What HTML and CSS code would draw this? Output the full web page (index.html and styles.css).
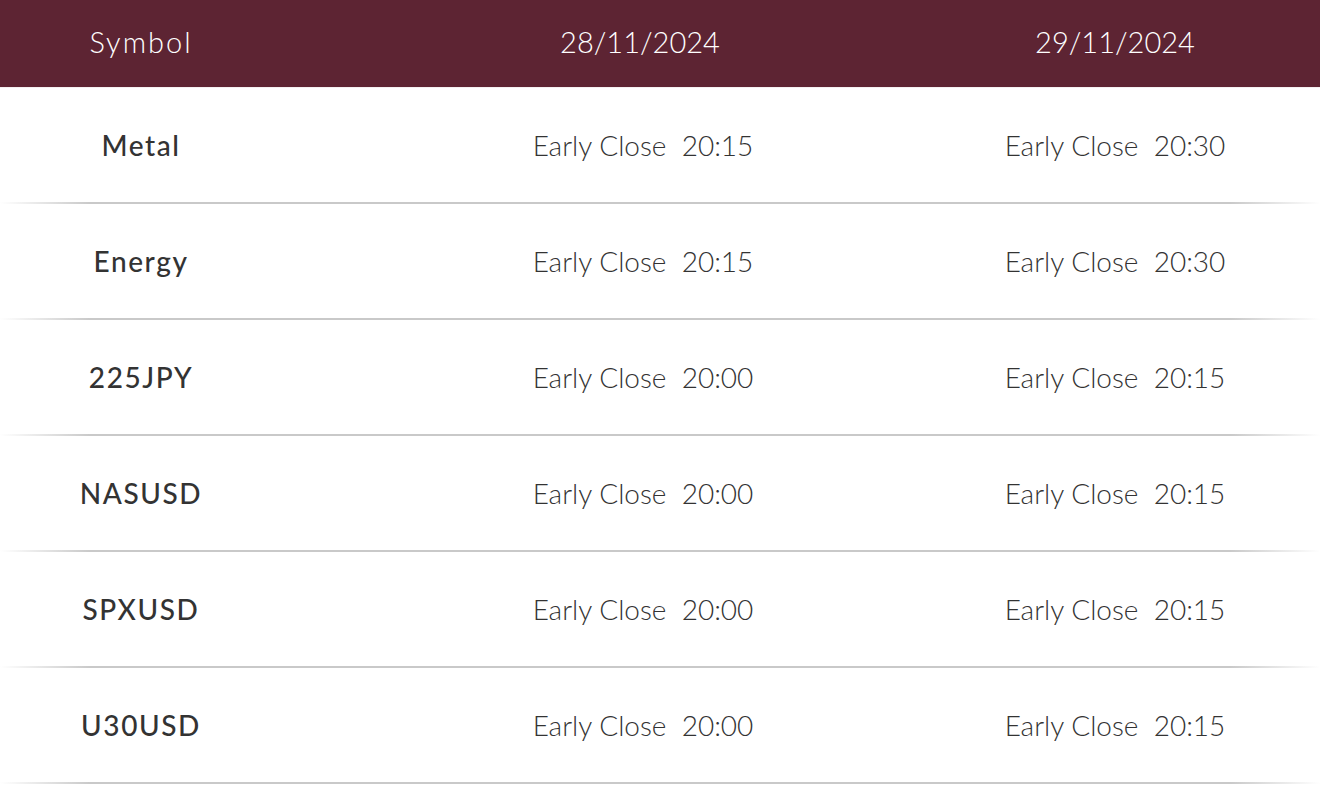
FILE: index.html
```html
<!DOCTYPE html>
<html lang="en">
<head>
<meta charset="utf-8">
<title>Early Close Schedule</title>
<link rel="stylesheet" href="styles.css">
</head>
<body>
<div class="table">
  <div class="head">
    <div class="cell c1">Symbol</div>
    <div class="cell c2">28/11/2024</div>
    <div class="cell c3">29/11/2024</div>
  </div>
  <div class="row">
    <div class="cell c1 sym">Metal</div>
    <div class="cell c2">Early Close&nbsp; 20:15</div>
    <div class="cell c3">Early Close&nbsp; 20:30</div>
  </div>
  <div class="row">
    <div class="cell c1 sym">Energy</div>
    <div class="cell c2">Early Close&nbsp; 20:15</div>
    <div class="cell c3">Early Close&nbsp; 20:30</div>
  </div>
  <div class="row">
    <div class="cell c1 sym">225JPY</div>
    <div class="cell c2">Early Close&nbsp; 20:00</div>
    <div class="cell c3">Early Close&nbsp; 20:15</div>
  </div>
  <div class="row">
    <div class="cell c1 sym">NASUSD</div>
    <div class="cell c2">Early Close&nbsp; 20:00</div>
    <div class="cell c3">Early Close&nbsp; 20:15</div>
  </div>
  <div class="row">
    <div class="cell c1 sym">SPXUSD</div>
    <div class="cell c2">Early Close&nbsp; 20:00</div>
    <div class="cell c3">Early Close&nbsp; 20:15</div>
  </div>
  <div class="row">
    <div class="cell c1 sym">U30USD</div>
    <div class="cell c2">Early Close&nbsp; 20:00</div>
    <div class="cell c3">Early Close&nbsp; 20:15</div>
  </div>
</div>
</body>
</html>
```
FILE: styles.css
```css
html, body {
  margin: 0;
  padding: 0;
  background: #ffffff;
}
body {
  font-family: "Lato", "Open Sans", sans-serif;
  color: #333333;
}
.table {
  width: 1320px;
}
.head, .row {
  display: grid;
  grid-template-columns: 282px 716px 234px 88px;
  align-items: center;
}
.head {
  height: 88px;
  padding-bottom: 5px;
  background: #5d2433;
  color: #ffffff;
  font-size: 29px;
  font-weight: 300;
  border-bottom: 1px solid #f4f0f1;
  box-sizing: border-box;
}
.head .c1 {
  letter-spacing: 2px;
}
.row {
  height: 116px;
  padding-bottom: 3px;
  box-sizing: border-box;
  font-size: 28px;
  font-weight: 300;
  position: relative;
}
.row::after {
  content: "";
  position: absolute;
  left: 0;
  right: 0;
  bottom: 0;
  height: 2px;
  background: linear-gradient(to right, rgba(200,200,200,0) 0px, #c9c9c9 90px, #c9c9c9 1230px, rgba(200,200,200,0) 1320px);
}
.cell {
  text-align: center;
  white-space: nowrap;
}
.row .c2 {
  padding-left: 6px;
}
.sym {
  font-weight: 500;
  font-size: 28px;
  letter-spacing: 1.6px;
}
```
